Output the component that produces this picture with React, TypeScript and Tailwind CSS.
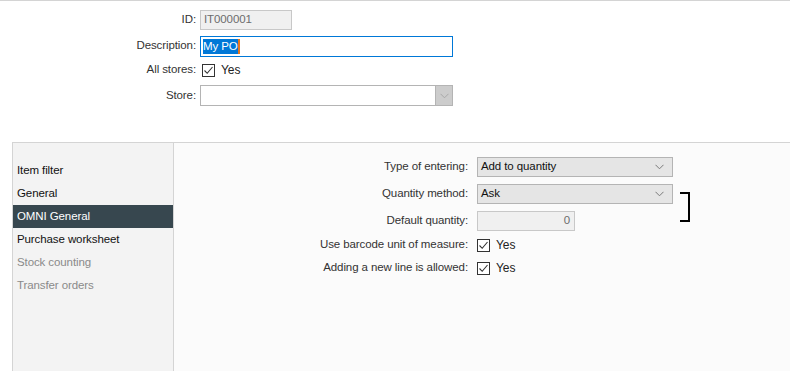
import React from 'react'

const FONT = "font-['Liberation_Sans',Arial,sans-serif]"

const MENU = [
  { label: 'Item filter', state: 'normal' },
  { label: 'General', state: 'normal' },
  { label: 'OMNI General', state: 'active' },
  { label: 'Purchase worksheet', state: 'normal' },
  { label: 'Stock counting', state: 'disabled' },
  { label: 'Transfer orders', state: 'disabled' },
]

function Chevron({ color = '#7a7a7a' }: { color?: string }) {
  return (
    <svg width="9" height="6" viewBox="0 0 9 6" fill="none">
      <path d="M0.5 0.8 L4.5 4.8 L8.5 0.8" stroke={color} strokeWidth="1" />
    </svg>
  )
}

function Check() {
  return (
    <span className="w-[13px] h-[13px] border border-[#333] bg-white flex items-center justify-center">
      <svg width="11" height="11" viewBox="0 0 11 11" fill="none">
        <path d="M1.5 5.5 L4.2 8.3 L9.5 2" stroke="#333" strokeWidth="1.1" />
      </svg>
    </span>
  )
}

function CheckYes() {
  return (
    <div className="flex items-center gap-[6px]">
      <Check />
      <span className="text-[12px] text-[#222]">Yes</span>
    </div>
  )
}

function Select({ value, width }: { value: string; width: string }) {
  return (
    <div className={`${width} h-[20px] bg-[#e5e5e5] border border-[#b4b4b4] flex items-center justify-between pl-[3px] pr-[8px]`}>
      <span className="text-[#111]">{value}</span>
      <Chevron />
    </div>
  )
}

export default function App() {
  return (
    <div className={`${FONT} text-[11.5px] tracking-[-0.1px] w-[790px] h-[371px] bg-white overflow-hidden flex flex-col`}>
      {/* Header form */}
      <div className="h-[142px] border-t border-[#d4d4d4] flex flex-col pt-[9px] shrink-0">
        <div className="flex items-center h-[20px]">
          <span className="w-[196px] text-right text-[#333]">ID:</span>
          <div className="ml-[4px] w-[92px] h-[20px] bg-[#f0f0f0] border border-[#c8c8c8] flex items-center px-[3px] text-[#6d6d6d]">
            IT000001
          </div>
        </div>
        <div className="flex items-center h-[20px] mt-[6px]">
          <span className="w-[196px] text-right text-[#333]">Description:</span>
          <div className="ml-[4px] w-[253px] h-[21px] border border-[#0078d7] bg-white flex items-center px-[2px]">
            <span className="bg-[#0078d7] text-white leading-[15px]">My PO</span>
            <span className="w-[2px] h-[15px] bg-[#e8761c]" />
          </div>
        </div>
        <div className="flex items-center h-[20px] mt-[4px]">
          <span className="w-[196px] text-right text-[#333]">All stores:</span>
          <div className="ml-[6px]">
            <CheckYes />
          </div>
        </div>
        <div className="flex items-center h-[21px] mt-[5px]">
          <span className="w-[196px] text-right text-[#333]">Store:</span>
          <div className="ml-[4px] w-[253px] h-[21px] border border-[#b4b4b4] bg-white flex justify-end">
            <div className="w-[17px] h-full bg-[#cccccc] border-l border-[#b4b4b4] flex items-center justify-center">
              <Chevron color="#a8a8a8" />
            </div>
          </div>
        </div>
      </div>

      {/* Tabbed panel */}
      <div className="flex-1 ml-[12px] border-t border-l border-[#d4d4d4] flex min-h-0">
        <div className="w-[161px] shrink-0 bg-[#f3f3f3] border-r border-[#d4d4d4] pt-[16px]">
          {MENU.map(item => (
            <div
              key={item.label}
              className={`h-[23px] flex items-center pl-[4px] ${
                item.state === 'active'
                  ? 'bg-[#37474f] text-white'
                  : item.state === 'disabled'
                  ? 'text-[#8a8a8a]'
                  : 'text-[#111]'
              }`}
            >
              {item.label}
            </div>
          ))}
        </div>

        <div className="flex-1 bg-[#fbfbfb] pt-[14px] flex flex-col">
          <div className="flex items-center h-[20px]">
            <span className="w-[294px] text-right text-[#333]">Type of entering:</span>
            <div className="ml-[9px]">
              <Select value="Add to quantity" width="w-[196px]" />
            </div>
          </div>
          <div className="flex items-center h-[20px] mt-[7px] relative">
            <span className="w-[294px] text-right text-[#333]">Quantity method:</span>
            <div className="ml-[9px]">
              <Select value="Ask" width="w-[196px]" />
            </div>
            <div className="absolute left-[506px] top-[8px] w-[10px] h-[30px] border-t-2 border-r-2 border-b-2 border-black" />
          </div>
          <div className="flex items-center h-[20px] mt-[7px]">
            <span className="w-[294px] text-right text-[#333]">Default quantity:</span>
            <div className="ml-[9px] w-[98px] h-[20px] bg-[#f0f0f0] border border-[#c8c8c8] flex items-center justify-end pr-[4px] text-[#6d6d6d]">
              0
            </div>
          </div>
          <div className="flex items-center h-[20px] mt-[4px]">
            <span className="w-[294px] text-right text-[#333]">Use barcode unit of measure:</span>
            <div className="ml-[9px]">
              <CheckYes />
            </div>
          </div>
          <div className="flex items-center h-[20px] mt-[3px]">
            <span className="w-[294px] text-right text-[#333]">Adding a new line is allowed:</span>
            <div className="ml-[9px]">
              <CheckYes />
            </div>
          </div>
        </div>
      </div>
    </div>
  )
}
